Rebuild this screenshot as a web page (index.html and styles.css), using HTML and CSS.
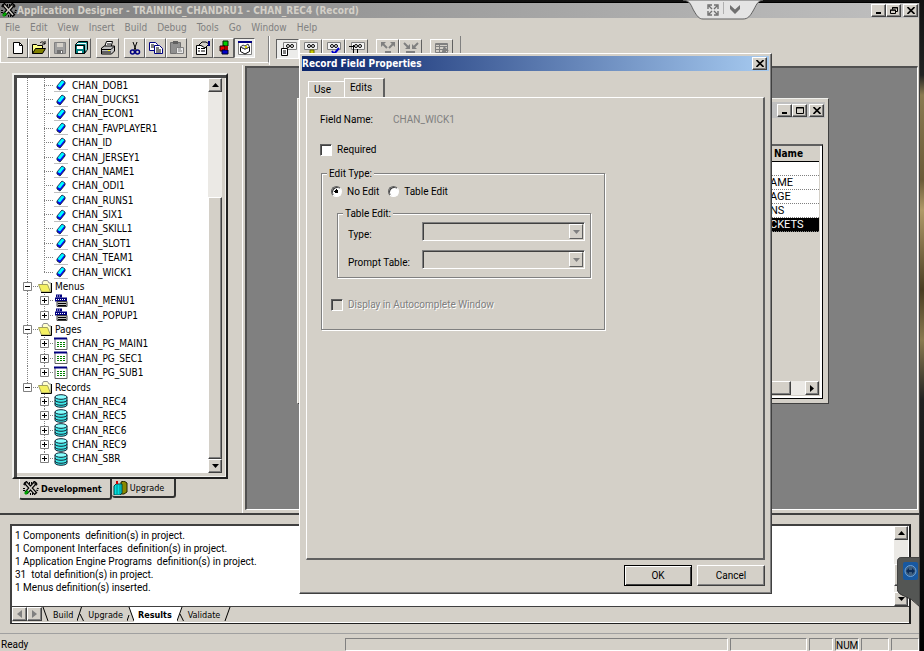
FILE: index.html
```
<!DOCTYPE html>
<html lang="en">
<head>
  <meta charset="UTF-8" />
  <meta name="viewport" content="width=device-width, initial-scale=1" />
  <title>Application Designer</title>
  <link rel="stylesheet" href="styles.css">
</head>
<body>
  <!-- shared icons -->
  <svg class="sprite" aria-hidden="true">
    <symbol id="plus" viewBox="0 0 9 9"><path d="M.5 .5h8v8h-8z" fill="#fff" stroke="#808080"/><path d="M2 4.5h5M4.5 2v5" stroke="#000"/></symbol>
    <symbol id="minus" viewBox="0 0 9 9"><path d="M.5 .5h8v8h-8z" fill="#fff" stroke="#808080"/><path d="M2 4.5h5" stroke="#000"/></symbol>
    <symbol id="field" viewBox="0 0 14 14"><path d="M0 13.5h14" stroke="#c0c0c0"/><path d="M3 8l5-6 3 2v2l-5 6-3-2z" fill="#00f" stroke="#234"/><path d="M3.500 8l4.500-5.500L10.500 4 6 9.500z" fill="#0ff"/></symbol>
    <symbol id="folder" viewBox="0 0 14 13"><path d="M4 3l1.500-2.500h4L11 3h2v9h-2z" fill="#ffc" stroke="#909090"/><path d="M.5 4.500h9l3 7.500H3.500z" fill="#f4f060" stroke="#a0a060"/><path d="M13.500 3v9.500H3" fill="none" stroke="#000"/></symbol>
    <symbol id="menu" viewBox="0 0 14 13"><path d="M2 0h6v3H2z" fill="#000080"/><path d="M1 3h12v4H1z" fill="#000080"/><path d="M3 1.500h4M2 5h9" stroke="#fff" stroke-dasharray="1 1"/><path d="M3 7h10v5H3z" fill="#c0c0c0" stroke="#404040"/><path d="M4 9h8M4 11h8" stroke="#000"/></symbol>
    <symbol id="page" viewBox="0 0 14 13"><path d="M1 1h12v11H1z" fill="#fff" stroke="#606060"/><path d="M0 0h13v2H0z" fill="#000080"/><path d="M3 5h9M3 7h9M3 9h9" stroke="#008000" stroke-dasharray="2 1"/></symbol>
    <symbol id="record" viewBox="0 0 14 14"><path d="M1 3v8c0 3 12 3 12 0V3z" fill="#40e8e8" stroke="#123"/><ellipse cx="7" cy="3" rx="6" ry="2.300" fill="#8ff" stroke="#123"/><path d="M1 6c0 3 12 3 12 0M1 9c0 3 12 3 12 0" fill="none" stroke="#123"/></symbol>
    <symbol id="up" viewBox="0 0 7 4"><path d="M0 4L3.500 0 7 4z"/></symbol>
    <symbol id="down" viewBox="0 0 7 4"><path d="M0 0h7L3.500 4z"/></symbol>
    <symbol id="close" viewBox="0 0 8 7"><path d="M.5 0l7 7M7.500 0l-7 7" stroke="#000" stroke-width="1.600"/></symbol>
    <symbol id="min" viewBox="0 0 8 7"><path d="M1 5h5v2H1z"/></symbol>
    <symbol id="max" viewBox="0 0 8 7"><path d="M.5 .5h7v6h-7zM0 1h8" fill="none" stroke="#000"/></symbol>
    <symbol id="restore" viewBox="0 0 8 7"><path d="M2.500 2.500v-2h5v4h-2M2 1h6M.5 3h5v3.500h-5zM0 3.200h6" fill="none" stroke="#000"/></symbol>
    <symbol id="tools" viewBox="0 0 16 15"><path d="M2 1l11 12M13 1L3 12" stroke="#000" stroke-width="4"/><path d="M3 2l9 10M12 2L4 11" stroke="#d4d0c8" stroke-width="1.500"/><path d="M1 4l2-3M10 1l4 3M1 7v4M15 7l-1 3M6 2h3M7 13h3" stroke="#000" stroke-dasharray="1 1" stroke-width="2"/><path d="M1 12l3-3 2 2-3 3z" fill="#00a000"/></symbol>
    <symbol id="glasses" viewBox="0 0 14 8"><path d="M.5 .5h13v7H.5z" fill="#f4f4f4" stroke="#808080"/><circle cx="5" cy="4" r="1.500" fill="none" stroke="#000"/><circle cx="9" cy="4" r="1.500" fill="none" stroke="#000"/></symbol>
  </svg>

  <div class="app">
    <header class="titlebar">
      <svg class="app-icon" width="16" height="15"><use href="#tools"/></svg>
      <h1>Application Designer - TRAINING_CHANDRU1 - CHAN_REC4 (Record)</h1>
      <div class="controls">
        <button class="ctl" aria-label="Minimize"><svg width="8" height="7"><use href="#min"/></svg></button>
        <button class="ctl" aria-label="Restore"><svg width="8" height="7"><use href="#restore"/></svg></button>
        <button class="ctl gap" aria-label="Close"><svg width="8" height="7"><use href="#close"/></svg></button>
      </div>
    </header>

    <nav class="menubar">
      <button>File</button><button>Edit</button><button>View</button><button>Insert</button><button>Build</button><button>Debug</button><button>Tools</button><button>Go</button><button>Window</button><button>Help</button>
    </nav>

    <div class="toolbars">
      <div class="toolbar main-tools">
        <button class="tool" aria-label="New"><svg width="16" height="16"><path d="M3.500 2.500h6l3 3v8h-9z" fill="#fff" stroke="#000"/><path d="M9.500 2.500v3h3" fill="none" stroke="#000"/></svg></button>
        <button class="tool" aria-label="Open"><svg width="16" height="16"><path d="M1.500 13.500v-9h4l1 1h5v3" fill="#ff8" stroke="#000"/><path d="M1.500 13.500l3-5h10l-3 5z" fill="#808000" stroke="#000"/><path d="M9 3c2-2 4-1 5 1M14 1v3h-3" fill="none" stroke="#000"/></svg></button>
        <button class="tool" aria-label="Save"><svg width="16" height="16"><path d="M2.500 2.500h11v11h-11z" fill="#a0a0a0" stroke="#808080"/><path d="M5 3h6v4H5z" fill="#d4d0c8"/><path d="M5 10h6v4H5z" fill="#707070"/><path d="M9 11h1v2H9z" fill="#fff"/></svg></button>
        <button class="tool" aria-label="Save all"><svg width="16" height="16"><path d="M5.500 1.500h9v8l-3 4h-9v-9z" fill="#008080" stroke="#000"/><path d="M2.500 5.500h9v8h-9z" fill="#008080" stroke="#000"/><path d="M4 6h6v3H4zM5 11h4v2H5z" fill="#fff"/><path d="M4 3.500h9v7" fill="none" stroke="#fff"/></svg></button>
        <button class="tool wide gap" aria-label="Print"><svg width="16" height="16"><path d="M4.500 7l2-5.500h6L11 7" fill="#fff" stroke="#000"/><path d="M1.500 8l3-2h10v5l-3 3h-10z" fill="#c0c0c0" stroke="#000"/><path d="M2 9.500h9l3-3M2 12h9M7 4h4" fill="none" stroke="#000"/><path d="M8 10h2v1H8z" fill="#ff0"/></svg></button>
        <button class="tool gap" aria-label="Cut"><svg width="16" height="16"><path d="M6 2l3 8M10 2L7 10" stroke="#000" fill="none"/><circle cx="5.500" cy="12" r="2" fill="none" stroke="#000080" stroke-width="1.500"/><circle cx="10.500" cy="12" r="2" fill="none" stroke="#000080" stroke-width="1.500"/></svg></button>
        <button class="tool" aria-label="Copy"><svg width="16" height="16"><path d="M1.500 2.500h6l2 2v6h-8z" fill="#fff" stroke="#000080"/><path d="M6.500 5.500h5l3 3v5h-8z" fill="#fff" stroke="#000080"/><path d="M3 5h3M3 7h3M8 8h3M8 10h5M8 12h5" stroke="#000"/></svg></button>
        <button class="tool" aria-label="Paste"><svg width="16" height="16"><path d="M1.500 2.500h10v11h-10z" fill="#909090" stroke="#707070"/><path d="M4 1h5v3H4z" fill="#606060"/><path d="M7.500 7.500h7v6h-7z" fill="#e8e8e8" stroke="#808080"/><path d="M9 9h3M9 11h4" stroke="#808080"/></svg></button>
        <button class="tool gap" aria-label="Properties"><svg width="16" height="16"><path d="M1.500 5.500h10v9h-10z" fill="#fff" stroke="#000"/><path d="M3 8.500h2M6 8.500h4M3 11h2M6 11h4" stroke="#000"/><path d="M4 5l3-3h4l3 2-4 4-3-2z" fill="#d4d0c8" stroke="#000"/><path d="M13 1h2v5h-2z" fill="#000080"/></svg></button>
        <button class="tool" aria-label="Build"><svg width="16" height="16"><path d="M7 1h5v5H7z" fill="#00d000" stroke="#020"/><path d="M4 6h5v5H4z" fill="#e00" stroke="#200"/><path d="M6 10h6v4H6z" fill="#00c" stroke="#002"/><path d="M9 6h3v4H9z" fill="#a00"/></svg></button>
        <button class="tool pressed" aria-label="Project workspace"><svg width="16" height="16"><path d="M1.500 1.500h13v13h-13z" fill="#fff" stroke="#808080"/><path d="M1 1h14v2H1z" fill="#000080"/><path d="M3.500 7l4.500 2 4.500-2v4.500L8 14l-4.500-2.500z" fill="#fff" stroke="#000"/><path d="M3.500 7L6 5l2 1 3-2 1.500 3L8 9z" fill="#eee" stroke="#404040"/><path d="M8 6h2v2H8z" fill="#dd0"/></svg></button>
      </div>
      <div class="toolbar record-tools">
        <button class="tool wide pressed" aria-label="Field display"><svg width="18" height="16"><use href="#glasses" x="4" y="1" width="14" height="8"/><path d="M2.500 7.500h6v7h-6z" fill="#fff" stroke="#000"/><path d="M4 10h3M4 12h3" stroke="#000"/></svg></button>
        <button class="tool wide" aria-label="Use display"><svg width="18" height="16"><use href="#glasses" x="2" y="1" width="14" height="8"/><path d="M8 9h4v4H8z" fill="#cc0" stroke="#660"/></svg></button>
        <button class="tool wide" aria-label="Edits display"><svg width="18" height="16"><use href="#glasses" x="2" y="1" width="14" height="8"/><path d="M7 10l2 3 5-6" fill="none" stroke="#00c" stroke-width="2"/></svg></button>
        <button class="tool wide" aria-label="PeopleCode display"><svg width="18" height="16"><use href="#glasses" x="3" y="1" width="14" height="8"/><path d="M1 5.500h6M5.500 4v11M9.500 8v6" stroke="#000"/></svg></button>
        <button class="tool wide gap" aria-label="Expand all" disabled><svg width="18" height="16"><path d="M2 1h5L2 6zM16 1h-5l5 5z" fill="#808080"/><path d="M4 3l4 4M14 3l-4 4M6 11h6" stroke="#808080" stroke-width="2"/></svg></button>
        <button class="tool wide" aria-label="Collapse all" disabled><svg width="18" height="16"><path d="M8 8V3L3 8zM10 8V3l5 5z" fill="#808080"/><path d="M2 2l5 5M16 2l-5 5M4 11h9" stroke="#808080" stroke-width="2"/></svg></button>
        <button class="tool wide gap" aria-label="Insert record" disabled><svg width="18" height="16"><path d="M2.500 2.500h12v9h-12zM2 3.500h12M2 5.500h12M2 8.500h12M6.500 3v8" fill="none" stroke="#808080"/><path d="M11 5l5 5h-3v3H9v-3z" fill="#808080"/></svg></button>
      </div>
    </div>

    <main class="work">
      <aside class="project">
        <div class="tree-frame">
          <ul class="tree">
            <li><i class="trunk"></i><i class="limb"></i><svg class="ico"><use href="#field"/></svg>CHAN_DOB1</li>
            <li><i class="trunk"></i><i class="limb"></i><svg class="ico"><use href="#field"/></svg>CHAN_DUCKS1</li>
            <li><i class="trunk"></i><i class="limb"></i><svg class="ico"><use href="#field"/></svg>CHAN_ECON1</li>
            <li><i class="trunk"></i><i class="limb"></i><svg class="ico"><use href="#field"/></svg>CHAN_FAVPLAYER1</li>
            <li><i class="trunk"></i><i class="limb"></i><svg class="ico"><use href="#field"/></svg>CHAN_ID</li>
            <li><i class="trunk"></i><i class="limb"></i><svg class="ico"><use href="#field"/></svg>CHAN_JERSEY1</li>
            <li><i class="trunk"></i><i class="limb"></i><svg class="ico"><use href="#field"/></svg>CHAN_NAME1</li>
            <li><i class="trunk"></i><i class="limb"></i><svg class="ico"><use href="#field"/></svg>CHAN_ODI1</li>
            <li><i class="trunk"></i><i class="limb"></i><svg class="ico"><use href="#field"/></svg>CHAN_RUNS1</li>
            <li><i class="trunk"></i><i class="limb"></i><svg class="ico"><use href="#field"/></svg>CHAN_SIX1</li>
            <li><i class="trunk"></i><i class="limb"></i><svg class="ico"><use href="#field"/></svg>CHAN_SKILL1</li>
            <li><i class="trunk"></i><i class="limb"></i><svg class="ico"><use href="#field"/></svg>CHAN_SLOT1</li>
            <li><i class="trunk"></i><i class="limb"></i><svg class="ico"><use href="#field"/></svg>CHAN_TEAM1</li>
            <li><i class="trunk"></i><i class="limb end"></i><svg class="ico"><use href="#field"/></svg>CHAN_WICK1</li>
            <li><i class="trunk node"><svg class="box"><use href="#minus"/></svg></i><svg class="ico folder"><use href="#folder"/></svg>Menus</li>
            <li><i class="trunk"></i><i class="limb"><svg class="box"><use href="#plus"/></svg></i><svg class="ico"><use href="#menu"/></svg>CHAN_MENU1</li>
            <li><i class="trunk"></i><i class="limb end"><svg class="box"><use href="#plus"/></svg></i><svg class="ico"><use href="#menu"/></svg>CHAN_POPUP1</li>
            <li><i class="trunk node"><svg class="box"><use href="#minus"/></svg></i><svg class="ico folder"><use href="#folder"/></svg>Pages</li>
            <li><i class="trunk"></i><i class="limb"><svg class="box"><use href="#plus"/></svg></i><svg class="ico"><use href="#page"/></svg>CHAN_PG_MAIN1</li>
            <li><i class="trunk"></i><i class="limb"><svg class="box"><use href="#plus"/></svg></i><svg class="ico"><use href="#page"/></svg>CHAN_PG_SEC1</li>
            <li><i class="trunk"></i><i class="limb end"><svg class="box"><use href="#plus"/></svg></i><svg class="ico"><use href="#page"/></svg>CHAN_PG_SUB1</li>
            <li><i class="trunk node end"><svg class="box"><use href="#minus"/></svg></i><svg class="ico folder"><use href="#folder"/></svg>Records</li>
            <li><i class="trunk none"></i><i class="limb"><svg class="box"><use href="#plus"/></svg></i><svg class="ico"><use href="#record"/></svg>CHAN_REC4</li>
            <li><i class="trunk none"></i><i class="limb"><svg class="box"><use href="#plus"/></svg></i><svg class="ico"><use href="#record"/></svg>CHAN_REC5</li>
            <li><i class="trunk none"></i><i class="limb"><svg class="box"><use href="#plus"/></svg></i><svg class="ico"><use href="#record"/></svg>CHAN_REC6</li>
            <li><i class="trunk none"></i><i class="limb"><svg class="box"><use href="#plus"/></svg></i><svg class="ico"><use href="#record"/></svg>CHAN_REC9</li>
            <li><i class="trunk none"></i><i class="limb end"><svg class="box"><use href="#plus"/></svg></i><svg class="ico"><use href="#record"/></svg>CHAN_SBR</li>
          </ul>
          <div class="scrollbar">
            <button class="arrow" aria-label="Scroll up"><svg width="7" height="4"><use href="#up"/></svg></button>
            <div class="track"></div>
            <div class="thumb"></div>
            <button class="arrow" aria-label="Scroll down"><svg width="7" height="4"><use href="#down"/></svg></button>
          </div>
        </div>
        <div class="project-tabs">
          <button class="active"><svg width="16" height="15"><use href="#tools"/></svg>Development</button>
          <button><svg width="15" height="14"><path d="M8 1l3-1 3 2v9l-3 2H8z" fill="#880" stroke="#220"/><path d="M1 5l2-2h6v9l-2 2H1z" fill="#00e0e0" stroke="#044"/><path d="M4 4v9M7 4v9" stroke="#088"/><path d="M3 0h2v3H3z" fill="#c00"/></svg>Upgrade</button>
        </div>
      </aside>

      <section class="workspace">
        <div class="child">
          <div class="child-title">
            <button class="ctl" aria-label="Minimize"><svg width="8" height="7"><use href="#min"/></svg></button>
            <button class="ctl" aria-label="Maximize"><svg width="8" height="7"><use href="#max"/></svg></button>
            <button class="ctl gap" aria-label="Close"><svg width="8" height="7"><use href="#close"/></svg></button>
          </div>
          <div class="grid-frame">
            <table class="fields">
              <thead><tr><th>Name</th></tr></thead>
              <tbody>
                <tr><td></td></tr>
                <tr><td>AME</td></tr>
                <tr><td>AGE</td></tr>
                <tr><td>NS</td></tr>
                <tr class="selected"><td>CKETS</td></tr>
              </tbody>
            </table>
            <div class="hscroll">
              <div class="thumb"></div>
              <div class="track"></div>
              <button class="arrow" aria-label="Scroll right"><svg width="4" height="7"><path d="M0 0l4 3.500L0 7z"/></svg></button>
            </div>
          </div>
        </div>
      </section>
    </main>

    <section class="output">
      <div class="output-frame">
        <div class="output-body">
          <pre class="log">1 Components  definition(s) in project.
1 Component Interfaces  definition(s) in project.
1 Application Engine Programs  definition(s) in project.
31  total definition(s) in project.
1 Menus definition(s) inserted.</pre>
          <div class="scrollbar">
            <button class="arrow" aria-label="Scroll up"><svg width="7" height="4"><use href="#up"/></svg></button>
            <div class="track"></div>
            <div class="thumb"></div>
            <div class="track short"></div>
            <button class="arrow" aria-label="Scroll down"><svg width="7" height="4"><use href="#down"/></svg></button>
          </div>
        </div>
        <div class="sheet-tabs">
          <button class="arrow" aria-label="Previous tab"><svg width="5" height="8"><path d="M5 0v8L0 4z" fill="#808080"/></svg></button>
          <button class="arrow" aria-label="Next tab"><svg width="5" height="8"><path d="M0 0v8l5-4z" fill="#808080"/></svg></button>
          <svg class="slant" width="7" height="15"><path d="M1 0l5 14" stroke="#000"/></svg>
          <button class="sheet">Build</button>
          <svg class="slant" width="7" height="15"><path d="M0 14L4.500 0M3 7l3.500 7" stroke="#000"/></svg>
          <button class="sheet">Upgrade</button>
          <svg class="slant" width="7" height="15"><path d="M2 0h5v15z" fill="#fff"/><path d="M0 14l2-6M2 0l5 14" stroke="#000"/></svg>
          <button class="sheet active">Results</button>
          <svg class="slant" width="7" height="15"><path d="M0 0h5L0 15z" fill="#fff"/><path d="M0 14L5 0M3 7l3.500 7" stroke="#000"/></svg>
          <button class="sheet">Validate</button>
          <svg class="slant" width="7" height="15"><path d="M1 14L6 0" stroke="#000"/></svg>
        </div>
      </div>
    </section>

    <footer class="statusbar">
      <span class="ready">Ready</span>
      <span class="cell message"></span>
      <span class="cell pos"></span>
      <span class="cell key"></span>
      <span class="cell key">NUM</span>
      <span class="cell lock"></span>
      <span class="cell lock"></span>
    </footer>
  </div>

  <!-- remote session handles -->
  <svg class="session-bar" width="80" height="20">
    <path d="M0 0C8 1 8 6 11 11s5 8 9 8h40c5 0 7-3 10-8s4-10 10-11z" fill="#e4e4e4" stroke="#606060"/>
    <path d="M40.500 2v12" stroke="#b0b0b0"/>
    <path d="M25 9V5h4M31 5h4v4M35 11v4h-4M29 15h-4v-4M26 6l3 3M34 6l-3 3M34 14l-3-3M26 14l3-3" fill="none" stroke="#707070" stroke-width="1.400"/>
    <path d="M47 5l5 4.500L57 5v4l-5 5-5-5z" fill="#707070"/>
  </svg>
  <svg class="session-side" width="23" height="50">
    <path d="M23 0H6Q0 0 0 6v24q0 6 5 8 10 3 18 12z" fill="#545654" stroke="#303030"/>
    <rect x="6" y="5" width="15" height="18" rx="2" fill="#1858a0"/>
    <circle cx="13.500" cy="14" r="5.500" fill="#3f5f80" stroke="#6aa0d8"/>
    <path d="M9 14l3-3v2h3v-2l3 3-3 3v-2h-3v2z" fill="#0c2c58"/>
  </svg>

  <form class="dialog">
    <div class="dialog-title">
      <h2>Record Field Properties</h2>
      <button type="button" class="ctl" aria-label="Close"><svg width="8" height="7"><use href="#close"/></svg></button>
    </div>
    <div class="dialog-tabs">
      <button type="button">Use</button>
      <button type="button" class="active">Edits</button>
    </div>
    <div class="panel">
      <div class="field-name"><span>Field Name:</span><span class="value">CHAN_WICK1</span></div>
      <label class="check"><input type="checkbox" name="required" /> Required</label>
      <fieldset class="edit-type">
        <legend>Edit Type:</legend>
        <div class="radios">
          <label><input type="radio" name="edit" checked /> No Edit</label>
          <label><input type="radio" name="edit" /> Table Edit</label>
        </div>
        <fieldset class="table-edit">
          <legend>Table Edit:</legend>
          <label for="type">Type:</label>
          <div class="combo"><select id="type" disabled></select><span class="drop"><svg width="7" height="4"><use href="#down"/></svg></span></div>
          <label for="prompt">Prompt Table:</label>
          <div class="combo"><select id="prompt" disabled></select><span class="drop"><svg width="7" height="4"><use href="#down"/></svg></span></div>
        </fieldset>
        <label class="check disabled"><input type="checkbox" name="auto" disabled /> Display in Autocomplete Window</label>
      </fieldset>
    </div>
    <div class="dialog-buttons">
      <button type="button" class="push default">OK</button>
      <button type="button" class="push">Cancel</button>
    </div>
  </form>
</body>
</html>
```
FILE: styles.css
```
* {
  box-sizing: border-box;
}

body {
  margin: 0;
  height: 100vh;
  padding: 2px 4px 0 0;
  overflow: hidden;
  background: linear-gradient(#111 0, #222 75px, #8a7a50 95px, #6b5a38 180px, #b09a68 210px, #4a3c22 290px, #8a7a50 340px, #222 400px, #000 100%);
  font-family: Roboto, "Liberation Sans", Arial, sans-serif;
  font-size: 10px;
  color: #000;
}

button {
  margin: 0;
  padding: 0;
  border: none;
  background: none;
  font: inherit;
  color: inherit;
}

svg {
  display: block;
  flex: none;
}

.sprite {
  position: absolute;
  width: 0;
  height: 0;
}

.app {
  height: 100%;
  display: flex;
  flex-direction: column;
  background: #d4d0c8;
  border-right: 1px solid #404040;
  border-top: 1px solid #000;
}

/* title bar */
.titlebar {
  height: 15px;
  display: flex;
  align-items: center;
  padding: 0 1px 0 1px;
  background: linear-gradient(to right, #7f7f7f, #c0c0c0);
  color: #d4d0c8;
}

.titlebar h1,
.dialog-title h2 {
  flex: 1;
  margin: 0;
  font: bold 10px/15px "DejaVu Sans Condensed", "DejaVu Sans", sans-serif;
  white-space: nowrap;
}

.controls {
  display: flex;
}

.ctl,
.arrow {
  display: flex;
  align-items: center;
  justify-content: center;
  flex: none;
  background: #d4d0c8;
  border: 1px solid;
  border-color: #fff #404040 #404040 #fff;
  box-shadow: inset -1px -1px #808080;
}

.ctl {
  width: 15px;
  height: 13px;
}

.ctl.gap {
  margin-left: 2px;
}

.arrow {
  width: 14px;
  height: 14px;
}

.menubar {
  display: flex;
  gap: 10px;
  height: 18px;
  padding-left: 5px;
  color: #808080;
  font-family: "DejaVu Sans Condensed", "DejaVu Sans", sans-serif;
}

/* toolbars */
.toolbars {
  display: flex;
  height: 29px;
}

.toolbar {
  display: flex;
  align-items: flex-start;
  border-left: 1px solid #fff;
}

.main-tools {
  width: 269px;
  height: 27px;
  padding: 2px 0 0 6px;
  border-bottom: 1px solid #fff;
  border-right: 1px solid #808080;
}

.record-tools {
  width: 192px;
  padding: 3px 0 0 6px;
  border-right: 1px solid #808080;
}

.tool {
  display: flex;
  align-items: center;
  justify-content: center;
  width: 21px;
  height: 20px;
  border: 1px solid;
  border-color: #fff #606060 #606060 #fff;
}

.tool.wide {
  width: 23px;
}

.tool.gap {
  margin-left: 5px;
}

.record-tools .gap {
  margin-left: 8px;
}

.tool.pressed {
  border-color: #606060 #fff #fff #606060;
  background: #ececea;
}

/* project tree */
.work {
  flex: 1;
  min-height: 0;
  display: flex;
  padding-right: 1px;
}

.project {
  width: 243px;
  display: flex;
  flex-direction: column;
  padding: 8px 14px 13px 12px;
  border-right: 1px solid #fff;
}

.tree-frame {
  flex: 1;
  min-height: 0;
  display: flex;
  padding: 0 4px 4px 0;
  background: #d4d0c8;
  border: 2px solid;
  border-color: #f0f0ec #202020 #202020 #f0f0ec;
  box-shadow: inset 3px 3px #484848, inset -1px -1px #f0f0ec;
}

.tree {
  flex: 1;
  display: flex;
  flex-direction: column;
  margin: 3px 0 0 3px;
  padding: 0 0 7px;
  list-style: none;
  background: #fff;
  font-family: "DejaVu Sans Condensed", "DejaVu Sans", sans-serif;
}

.tree li {
  flex: 1;
  min-height: 0;
  display: flex;
  align-items: center;
  white-space: nowrap;
}

.trunk,
.limb {
  align-self: stretch;
  display: flex;
  align-items: center;
  flex: none;
  width: 18px;
  background-image: repeating-linear-gradient(#808080 0 1px, transparent 1px 2px), repeating-linear-gradient(to right, #808080 0 1px, transparent 1px 2px);
  background-repeat: no-repeat;
}

.trunk {
  background-position: 10px 0, 10px 50%;
  background-size: 1px 100%, 0 0;
  padding-left: 6px;
}

.trunk.node {
  width: 21px;
  background-size: 1px 100%, 11px 1px;
}

.trunk.none {
  background: none;
}

.limb {
  background-position: 9px 0, 9px 50%;
  background-size: 1px 100%, 9px 1px;
  padding-left: 5px;
}

.limb.end {
  background-size: 1px 50%, 9px 1px;
}

.trunk.end {
  background-size: 1px 50%, 11px 1px;
}

.box {
  width: 9px;
  height: 9px;
}

.ico {
  width: 14px;
  height: 14px;
  margin: 0 4px 0 1px;
}

.ico.folder {
  height: 13px;
  margin: 0 3px 0 0;
}

.scrollbar {
  display: flex;
  flex-direction: column;
  width: 14px;
  background: #d4d0c8;
}

.track {
  flex: 1;
  background: #ebe9e5;
}

.scrollbar .thumb,
.hscroll .thumb {
  background: #d4d0c8;
  border: 1px solid;
  border-color: #fff #404040 #404040 #fff;
  box-shadow: inset -1px -1px #808080;
}

.tree-frame .scrollbar {
  margin-top: 3px;
}

.tree-frame .track {
  flex: 106;
}

.tree-frame .thumb {
  flex: 262;
}

.project-tabs {
  display: flex;
  align-items: flex-start;
  padding-left: 7px;
}

.project-tabs button {
  display: flex;
  align-items: center;
  gap: 2px;
  height: 19px;
  padding: 0 10px 0 1px;
  border: solid #303030;
  border-width: 0 2px 2px 0;
  border-radius: 0 0 3px 3px;
  font-family: "DejaVu Sans Condensed", "DejaVu Sans", sans-serif;
  font-size: 9px;
}

.project-tabs .active {
  height: 21px;
  padding: 0 8px 0 3px;
  border-left: 1px solid #fff;
  font-weight: bold;
}

/* workspace with the child window */
.workspace {
  flex: 1;
  min-width: 0;
  margin: 1px 0 3px 2px;
  padding: 30px 88px 105px 50px;
  background: #808080;
  border: solid;
  border-width: 2px 1px 1px 2px;
  border-color: #505050 #fff #fff #505050;
}

.child {
  height: 100%;
  display: flex;
  flex-direction: column;
  padding: 3px 3px 3px 3px;
  background: #d4d0c8;
  border: 1px solid;
  border-color: #f0f0ec #404040 #404040 #f0f0ec;
}

.child-title {
  display: flex;
  justify-content: flex-end;
  align-items: center;
  height: 16px;
  padding-right: 1px;
  background: #c0c0c0;
}

.grid-frame {
  flex: 1;
  display: flex;
  flex-direction: column;
  justify-content: space-between;
  margin: 26px 2px 1px 0;
  padding: 1px 3px 3px 0;
  border: solid;
  border-width: 2px 1px 1px 0;
  border-color: #606060 #000 #000;
  box-shadow: inset -2px -2px #fff;
}

.fields {
  width: 100%;
  border-spacing: 0;
  line-height: 12px;
}

.fields th {
  height: 15px;
  padding: 0 0 0 473px;
  text-align: left;
  border-bottom: 1px solid #000;
  font-family: "DejaVu Sans Condensed", "DejaVu Sans", sans-serif;
}

.fields td {
  height: 14px;
  padding: 0 0 0 469px;
  background: #fff;
  border-bottom: 1px dotted #808080;
  font-size: 11px;
}

.fields .selected td {
  background: #000;
  color: #fff;
}

.hscroll {
  display: flex;
  height: 14px;
}

.hscroll .thumb {
  flex: 1;
}

.hscroll .track {
  flex: none;
  width: 14px;
}

/* results window */
.output {
  padding: 9px 8px 9px 10px;
  border-top: 2px solid #404040;
}

.output-frame {
  border: solid;
  border-width: 2px 2px 1px 2px;
  border-color: #404040 #202020 #202020 #404040;
}

.output-body {
  display: flex;
  height: 80px;
  padding-right: 1px;
  background: #fff;
}

.log {
  flex: 1;
  margin: 0;
  padding: 3px 0 0 3px;
  font: 10px/13px Roboto, "Liberation Sans", Arial, sans-serif;
}

.output .thumb {
  height: 22px;
}

.output .track.short {
  flex: none;
  height: 6px;
}

.sheet-tabs {
  display: flex;
  height: 17px;
  border-top: 1px solid #404040;
  border-bottom: 1px solid #fff;
}

.sheet-tabs .arrow {
  width: 15px;
}

.slant {
  fill: none;
}

.sheet {
  padding: 0 4px;
  font-family: "DejaVu Sans Condensed", "DejaVu Sans", sans-serif;
  font-size: 9px;
}

.sheet.active {
  padding: 0 5px 0 4px;
  font-weight: bold;
  background: #fff;
}

/* status bar */
.statusbar {
  display: flex;
  gap: 2px;
  height: 18px;
  padding: 4px 0 0 1px;
  border-top: 1px solid #a0a0a0;
  line-height: 13px;
}

.ready {
  width: 342px;
}

.cell {
  border: 1px solid;
  border-color: #808080 #fff #fff #808080;
}

.message {
  flex: 1;
}

.pos {
  width: 77px;
}

.key {
  width: 24px;
}

.lock {
  width: 28px;
}

/* remote session handles */
.session-bar {
  position: absolute;
  top: 0;
  right: 161px;
}

.session-side {
  position: absolute;
  right: 4px;
  bottom: 44px;
}

/* dialog */
.dialog {
  position: absolute;
  top: 53px;
  left: 299px;
  width: 473px;
  padding: 2px 6px 7px;
  background: #d4d0c8;
  border: 1px solid;
  border-color: #fff #404040 #404040 #fff;
  box-shadow: inset -1px -1px #808080;
}

.dialog-title {
  display: flex;
  align-items: center;
  height: 15px;
  margin: 0 -4px 7px;
  padding-right: 2px;
  color: #fff;
  background: linear-gradient(to right, #0a246a, #a6caf0);
}

.dialog-tabs {
  display: flex;
  align-items: flex-end;
  padding-left: 2px;
}

.dialog-tabs button {
  width: 36px;
  height: 16px;
  padding-left: 5px;
  text-align: left;
  border-top: 1px solid #fff;
  border-left: 1px solid #fff;
}

.dialog-tabs .active {
  width: 41px;
  height: 19px;
  padding-bottom: 2px;
  border-right: 2px solid #606060;
}

.panel {
  height: 463px;
  padding: 14px 13px;
  border: solid;
  border-width: 1px 2px 2px 1px;
  border-color: #fff #606060 #606060 #fff;
}

.field-name {
  display: flex;
  height: 31px;
  line-height: 15px;
}

.field-name span {
  width: 73px;
}

.field-name .value {
  color: #808080;
}

.check {
  display: flex;
  align-items: center;
  gap: 5px;
  height: 13px;
}

.check input,
.radios input {
  appearance: none;
  flex: none;
  width: 12px;
  height: 12px;
  margin: 0;
  background: #fff;
  border: 1px solid;
  border-color: #606060 #fff #fff #606060;
  box-shadow: inset 1px 1px #404040;
}

.check input:disabled {
  background: #d4d0c8;
}

.disabled {
  color: #808080;
  text-shadow: 1px 1px #fff;
}

fieldset {
  min-width: 0;
  margin: 0;
  border: 1px solid #808080;
  box-shadow: 1px 1px #fff, inset 1px 1px #fff;
}

legend {
  margin: 0;
  padding: 0 2px;
  line-height: 13px;
  background: #d4d0c8;
}

.edit-type {
  width: 284px;
  height: 163px;
  margin: 11px 0 0 1px;
  padding: 0 13px 0 9px;
}

.edit-type > legend,
.table-edit > legend {
  margin-left: -4px;
}

.radios {
  display: flex;
  gap: 9px;
  height: 27px;
  padding-top: 5px;
}

.radios label {
  display: flex;
  align-items: center;
  gap: 5px;
  height: 13px;
}

.radios input {
  width: 11px;
  height: 11px;
  border-radius: 50%;
}

.radios input:checked {
  background: radial-gradient(#000 0 2px, #fff 2px 100%);
}

.table-edit {
  display: grid;
  grid-template-columns: 75px 163px;
  row-gap: 9px;
  margin-left: 6px;
  padding: 2px 5px 8px 9px;
}

.table-edit label {
  padding: 7px 0 0 1px;
}

.combo {
  display: flex;
  height: 19px;
  padding: 1px;
  border: 1px solid;
  border-color: #808080 #fff #fff #808080;
  box-shadow: inset 1px 1px #404040;
}

.combo select {
  appearance: none;
  flex: 1;
  min-width: 0;
  border: none;
  background: none;
}

.drop {
  display: flex;
  align-items: center;
  justify-content: center;
  width: 14px;
  fill: #808080;
  border: 1px solid;
  border-color: #fff #606060 #606060 #fff;
}

.edit-type > .check {
  margin-top: 20px;
}

.dialog-buttons {
  display: flex;
  justify-content: flex-end;
  gap: 5px;
  padding-top: 5px;
}

.push {
  width: 68px;
  height: 21px;
  border: 1px solid;
  border-color: #fff #404040 #404040 #fff;
  box-shadow: inset -1px -1px #808080;
}

.push.default {
  border-color: #000;
  box-shadow: inset 1px 1px #fff, inset -1px -1px #404040;
}
```
